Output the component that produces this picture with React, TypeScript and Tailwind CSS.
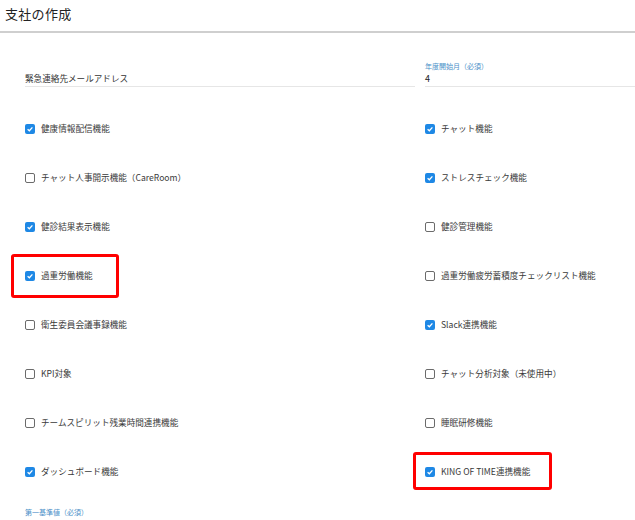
import React from 'react';

const left = [
  { label: '健康情報配信機能', checked: true },
  { label: 'チャット人事開示機能（CareRoom）', checked: false },
  { label: '健診結果表示機能', checked: true },
  { label: '過重労働機能', checked: true, mark: true },
  { label: '衛生委員会議事録機能', checked: false },
  { label: 'KPI対象', checked: false },
  { label: 'チームスピリット残業時間連携機能', checked: false },
  { label: 'ダッシュボード機能', checked: true },
];

const right = [
  { label: 'チャット機能', checked: true },
  { label: 'ストレスチェック機能', checked: true },
  { label: '健診管理機能', checked: false },
  { label: '過重労働疲労蓄積度チェックリスト機能', checked: false },
  { label: 'Slack連携機能', checked: true },
  { label: 'チャット分析対象（未使用中）', checked: false },
  { label: '睡眠研修機能', checked: false },
  { label: 'KING OF TIME連携機能', checked: true, mark: true },
];

function Box({ checked }: { checked: boolean }) {
  if (checked) {
    return (
      <span className="w-[10px] h-[10px] rounded-[2px] bg-[#1e88e5] flex items-center justify-center shrink-0">
        <svg width="8" height="8" viewBox="0 0 10 10">
          <path d="M2 5.2 L4.2 7.2 L8 3" fill="none" stroke="#fff" strokeWidth="1.6" />
        </svg>
      </span>
    );
  }
  return <span className="w-[10px] h-[10px] rounded-[2px] border-[1.5px] border-[#6b6b6b] bg-white shrink-0" />;
}

function Row({ label, checked, mark, side }: { label: string; checked: boolean; mark?: boolean; side: 'l' | 'r' }) {
  return (
    <div className="relative h-[49px] flex items-center gap-[6px]">
      {mark && side === 'l' && (
        <div className="absolute left-[-14px] top-[3px] w-[108px] h-[44px] border-[3px] border-[#ff0000] rounded-[3px]" />
      )}
      {mark && side === 'r' && (
        <div className="absolute left-[-12px] top-[5px] w-[139px] h-[38px] border-[3px] border-[#ff0000] rounded-[3px]" />
      )}
      <Box checked={checked} />
      <span className="text-[8.6px] text-[#3a3a3a] whitespace-nowrap">{label}</span>
    </div>
  );
}

export default function App() {
  return (
    <div className="w-[635px] h-[520px] bg-white overflow-hidden" style={{ fontFamily: '"Noto Sans CJK JP", "Noto Sans", sans-serif' }}>
      <div className="h-[33px] flex items-center pl-[5px] border-b-2 border-[#cfcfcf]">
        <h1 className="text-[13px] text-[#222] tracking-[0.3px] -mt-[3px]">支社の作成</h1>
      </div>
      <div className="pl-[25px] grid grid-cols-[390px_1fr] gap-x-[10px]">
        <div className="pt-[39px] h-[71px]">
          <div className="h-[15px] text-[8.6px] text-[#333] flex items-center border-b border-[#e6e6e6] pb-[2px]">
            緊急連絡先メールアドレス
          </div>
        </div>
        <div className="pt-[28px] h-[71px]">
          <div className="h-[11px] text-[7px] text-[#4a8fc8] leading-[11px]">年度開始月（必須）</div>
          <div className="h-[15px] text-[9px] text-[#222] leading-[13px] border-b border-[#e6e6e6]">4</div>
        </div>
        <div>
          {left.map((r) => (
            <Row key={r.label} {...r} side="l" />
          ))}
        </div>
        <div>
          {right.map((r) => (
            <Row key={r.label} {...r} side="r" />
          ))}
        </div>
        <div className="mt-[11px] text-[7px] text-[#4a8fc8] leading-[11px]">第一基準値（必須）</div>
      </div>
    </div>
  );
}
